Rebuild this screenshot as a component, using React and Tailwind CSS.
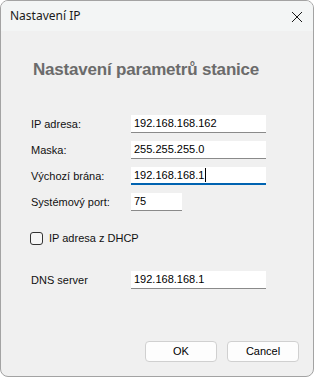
export default function App() {
  const font = { fontFamily: '"Liberation Sans", Arial, sans-serif' };
  const rows = [
    { label: "IP adresa:", value: "192.168.168.162", w: "w-[135px]" },
    { label: "Maska:", value: "255.255.255.0", w: "w-[135px]" },
    { label: "Výchozí brána:", value: "192.168.168.1", w: "w-[135px]", focus: true },
    { label: "Systémový port:", value: "75", w: "w-[51px]" },
  ];

  return (
    <div className="w-[314px] h-[377px] bg-white">
      <div className="w-[314px] h-[377px] rounded-[8px] border border-[#a3a3a3] bg-[#f0f0f0] overflow-hidden flex flex-col">
        {/* title bar */}
        <div className="h-[30px] bg-[#f3f5f5] flex items-center justify-between pl-[9px] pr-[10px] shrink-0">
          <span className="text-[12px] text-[#1a1a1a]" style={{ fontFamily: '"Noto Sans", "Open Sans", sans-serif' }}>
            Nastavení IP
          </span>
          <svg width="12" height="12" viewBox="0 0 12 12" className="mt-[1px]">
            <path d="M1 1 L11 11 M11 1 L1 11" stroke="#1a1a1a" strokeWidth="1" />
          </svg>
        </div>

        <div className="flex-1 flex flex-col pl-[29px] pr-[14px] pb-[14px]" style={font}>
          <div className="mt-[29px] pl-[3px] h-[20px] flex items-center text-[17px] font-bold text-[#6b6b6b] tracking-[-0.2px]">
            Nastavení parametrů stanice
          </div>

          <div className="mt-[35px] flex flex-col gap-[8px]">
            {rows.map((r) => (
              <div key={r.label} className="flex items-center h-[18px]">
                <div className="w-[101px] pl-[1px] text-[11px] text-[#111]">{r.label}</div>
                <div
                  className={`${r.w} h-[18px] bg-white flex items-center pl-[3px] text-[11px] text-black ${
                    r.focus ? "border-b-2 border-[#0063b1]" : "border-b border-[#8a8a8a]"
                  }`}
                >
                  {r.value}
                  {r.focus && <span className="inline-block w-px h-[14px] bg-black ml-[1px]" />}
                </div>
              </div>
            ))}
          </div>

          <div className="mt-[21px] flex items-center h-[13px]">
            <div className="w-[13px] h-[13px] rounded-[3px] border border-[#333] bg-[#f6f6f6]" />
            <span className="ml-[6px] text-[11px] text-[#111]">IP adresa z DHCP</span>
          </div>

          <div className="mt-[26px] flex items-center h-[18px]">
            <div className="w-[101px] pl-[1px] text-[11px] text-[#111]">DNS server</div>
            <div className="w-[135px] h-[18px] bg-white flex items-center pl-[3px] text-[11px] text-black border-b border-[#8a8a8a]">
              192.168.168.1
            </div>
          </div>

          <div className="mt-auto flex justify-end gap-[10px]">
            <button className="w-[72px] h-[21px] rounded-[4px] border border-[#d0d0d0] bg-[#fdfdfd] text-[11px] text-black">
              OK
            </button>
            <button className="w-[72px] h-[21px] rounded-[4px] border border-[#d0d0d0] bg-[#fdfdfd] text-[11px] text-black">
              Cancel
            </button>
          </div>
        </div>
      </div>
    </div>
  );
}
